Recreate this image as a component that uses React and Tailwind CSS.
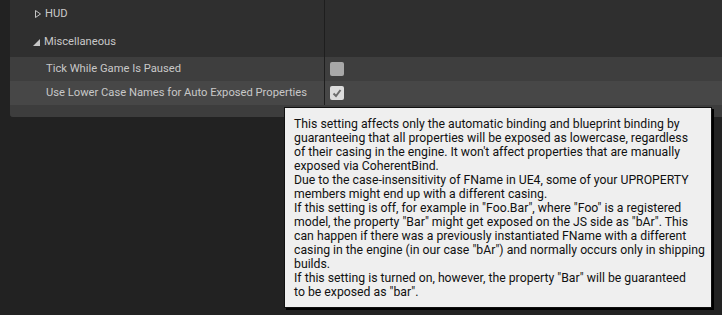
import React from "react";

const lines = [
  "This setting affects only the automatic binding and blueprint binding by",
  "guaranteeing that all properties will be exposed as lowercase, regardless",
  "of their casing in the engine. It won't affect properties that are manually",
  "exposed via CoherentBind.",
  "Due to the case-insensitivity of FName in UE4, some of your UPROPERTY",
  "members might end up with a different casing.",
  'If this setting is off, for example in "Foo.Bar", where "Foo" is a registered',
  'model, the property "Bar" might get exposed on the JS side as "bAr". This',
  "can happen if there was a previously instantiated FName with a different",
  'casing in the engine (in our case "bAr") and normally occurs only in shipping',
  "builds.",
  'If this setting is turned on, however, the property "Bar" will be guaranteed',
  'to be exposed as "bar".',
];

function Checkbox({ checked }) {
  return (
    <div className={"w-[14px] h-[14px] rounded-[2px] flex items-center justify-center " + (checked ? "bg-[#dcdcdc]" : "bg-[#a8a8a8]")}>
      {checked && (
        <svg width="10" height="10" viewBox="0 0 10 10">
          <path d="M1.5 5.5 L4 8 L8.5 2" fill="none" stroke="#6b6b6b" strokeWidth="2" />
        </svg>
      )}
    </div>
  );
}

function Row({ children, value, className = "", h = "h-[24px]" }) {
  return (
    <div className={"grid grid-cols-[315px_1fr] " + h + " " + className}>
      <div className="flex items-center border-r border-[#1e1e1e]">{children}</div>
      <div className="flex items-center pl-[5px]">{value}</div>
    </div>
  );
}

export default function App() {
  return (
    <div className="relative w-[722px] h-[315px] overflow-hidden bg-[#222222] text-[11.2px] text-[#c8c8c8]" style={{ fontFamily: "Roboto, 'Liberation Sans', sans-serif" }}>
      <div className="ml-[10px] bg-[#2f2f2f] rounded-bl-[3px]">
        <Row h="h-[28px]">
          <div className="flex items-center pl-[25px] gap-[4px]">
            <svg width="6" height="8" viewBox="0 0 6 8">
              <path d="M0.5 0.5 L5.5 4 L0.5 7.5 Z" fill="none" stroke="#c6c6c6" strokeWidth="1" />
            </svg>
            <span>HUD</span>
          </div>
        </Row>
        <Row h="h-[29px]">
          <div className="flex items-center pl-[23px] gap-[4px]">
            <svg width="7" height="7" viewBox="0 0 7 7">
              <path d="M7 0 L7 7 L0 7 Z" fill="#c6c6c6" />
            </svg>
            <span>Miscellaneous</span>
          </div>
        </Row>
        <Row className="bg-[#3e3e3e]" value={<Checkbox />}>
          <span className="pl-[36px]">Tick While Game Is Paused</span>
        </Row>
        <Row className="bg-[#474747]" value={<Checkbox checked />}>
          <span className="pl-[36px]">Use Lower Case Names for Auto Exposed Properties</span>
        </Row>
        <div className="h-[12px] bg-[#3d3d3d] rounded-bl-[3px]" />
      </div>

      <div className="absolute left-[284px] top-[107px] w-[428px] bg-[#efefef] border border-[#111] shadow-[2px_2px_0_#000] pl-[9px] pt-[9px] pb-[8px] text-[12.25px] leading-[14px] text-[#111]">
        {lines.map((l, i) => (
          <div key={i} className="whitespace-nowrap">{l}</div>
        ))}
      </div>
    </div>
  );
}
